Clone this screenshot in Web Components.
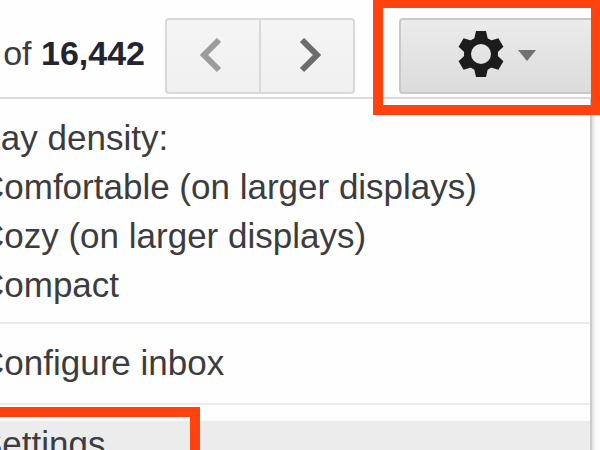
<!DOCTYPE html>
<html lang="en">
<head>
<meta charset="utf-8">
<title>Mail settings menu</title>
<style>
  body {
    margin: 0;
    height: 100vh;
    overflow: hidden;
    background: #fdfdfd;
    color: #3c3c40;
    font-family: "Liberation Sans", Arial, sans-serif;
    font-size: 35px;
  }
</style>
</head>
<body>
<mail-toolbar>
  <mail-counter total="16,442"></mail-counter>
  <page-buttons></page-buttons>
  <gear-button></gear-button>
</mail-toolbar>
<settings-menu>
  <menu-section>
    <menu-label>Display density:</menu-label>
    <menu-option>Comfortable (on larger displays)</menu-option>
    <menu-option>Cozy (on larger displays)</menu-option>
    <menu-option>Compact</menu-option>
  </menu-section>
  <menu-section>
    <menu-option>Configure inbox</menu-option>
  </menu-section>
  <menu-section>
    <menu-option active>Settings</menu-option>
  </menu-section>
</settings-menu>

<script>
function define(name, html, setup) {
  const template = document.createElement('template');
  template.innerHTML = html;

  customElements.define(name, class extends HTMLElement {
    constructor() {
      super();
      this.attachShadow({ mode: 'open' });
      this.shadowRoot.appendChild(template.content.cloneNode(true));
    }

    connectedCallback() {
      if (setup) setup(this, this.shadowRoot);
    }
  });
}

define('mail-toolbar', `
<style>
  :host {
    box-sizing: border-box;
    height: 99px;
    padding-top: 18px;
    display: flex;
    justify-content: flex-end;
    align-items: flex-start;
    background: #fefefe;
    border-bottom: 2px solid #d8d8d8;
  }
</style>
<slot></slot>
`);

define('mail-counter', `
<style>
  :host {
    margin-right: 20px;
    line-height: 70px;
    font-size: 34px;
    white-space: nowrap;
  }
  b {
    color: #242430;
  }
</style>
<span>of <b></b></span>
`, (el, root) => {
  root.querySelector('b').textContent = el.getAttribute('total');
});

define('page-buttons', `
<style>
  :host {
    display: flex;
    margin-right: 44px;
  }
  button {
    box-sizing: border-box;
    width: 96px;
    height: 76px;
    padding: 0;
    display: flex;
    align-items: center;
    justify-content: center;
    border: 2px solid #d9d9d9;
    border-radius: 4px 0 0 4px;
    background: linear-gradient(#f5f5f5, #f0f0f0);
    cursor: pointer;
  }
  button + button {
    margin-left: -2px;
    border-radius: 0 4px 4px 0;
  }
  path {
    fill: none;
    stroke: #9c9c9c;
    stroke-width: 6;
  }
  button + button path {
    stroke: #6c6c6c;
  }
</style>
<button aria-label="Newer">
  <svg width="28" height="36" viewBox="0 0 28 36"><path d="M20 2 5 17l15 15"/></svg>
</button>
<button aria-label="Older">
  <svg width="28" height="36" viewBox="0 0 28 36"><path d="M9 2l15 15L9 32"/></svg>
</button>
`);

define('gear-button', `
<style>
  :host {
    position: relative;
    z-index: 2;
    flex: 0 0 201px;
  }
  button {
    box-sizing: border-box;
    width: 100%;
    height: 76px;
    padding: 0 0 0 57px;
    display: flex;
    align-items: center;
    gap: 14px;
    border: 2px solid #c8c8c8;
    border-radius: 4px;
    background: linear-gradient(#ebebeb, #dcdcdc);
    cursor: pointer;
  }
  .gear {
    margin-bottom: 4px;
    fill: #1c1c1c;
  }
  /* red callout frame round the button */
  :host::after {
    content: "";
    position: absolute;
    top: -20px;
    right: -1px;
    bottom: -21px;
    left: -26px;
    border: 10px solid #ff420e;
    pointer-events: none;
  }
</style>
<button aria-label="Settings" aria-haspopup="menu">
  <svg class="gear" width="46" height="48" viewBox="-23 -24 46 48">
    <path d="M-5-23h10l2.500 11h-15z"/>
    <path d="M-5-23h10l2.500 11h-15z" transform="rotate(60)"/>
    <path d="M-5-23h10l2.500 11h-15z" transform="rotate(120)"/>
    <path d="M-5-23h10l2.500 11h-15z" transform="rotate(180)"/>
    <path d="M-5-23h10l2.500 11h-15z" transform="rotate(240)"/>
    <path d="M-5-23h10l2.500 11h-15z" transform="rotate(300)"/>
    <circle r="13.500" fill="none" stroke="#1c1c1c" stroke-width="7"/>
  </svg>
  <svg width="18" height="12" viewBox="0 0 18 12"><path d="M0 0h18L9 11z" fill="#707070"/></svg>
</button>
`);

define('settings-menu', `
<style>
  :host {
    display: block;
    margin: 0 8px 0 -97px;
    background: #fefefe;
    border-right: 2px solid #ccc;
    box-shadow: 2px 0 3px #ddd;
  }
</style>
<div role="menu"><slot></slot></div>
`);

define('menu-section', `
<style>
  :host {
    display: block;
    padding: 14px 0;
    border-bottom: 2px solid #ebebeb;
  }
  :host(:first-of-type) {
    padding-bottom: 13px;
  }
  :host(:nth-of-type(2)) {
    padding-bottom: 16px;
  }
  :host(:last-of-type) {
    padding-top: 16px;
  }
</style>
<slot></slot>
`);

define('menu-label', `
<style>
  :host {
    display: block;
    padding-left: 20px;
    line-height: 49px;
  }
</style>
<slot></slot>
`);

define('menu-option', `
<style>
  :host {
    display: block;
    position: relative;
  }
  button {
    display: block;
    width: 100%;
    padding: 0 0 0 76px;
    border: 0;
    background: none;
    color: inherit;
    font: inherit;
    line-height: 49px;
    text-align: left;
    white-space: nowrap;
    cursor: pointer;
  }
  :host([active]) button {
    background: #ececec;
    line-height: 46px;
    padding-bottom: 4px;
  }
  /* red callout frame round the active option */
  :host([active])::after {
    content: "";
    box-sizing: border-box;
    position: absolute;
    top: -14px;
    bottom: -14px;
    left: 40px;
    width: 257px;
    border: 10px solid #ff420e;
    pointer-events: none;
  }
</style>
<button role="menuitem"><slot></slot></button>
`);
</script>
</body>
</html>
